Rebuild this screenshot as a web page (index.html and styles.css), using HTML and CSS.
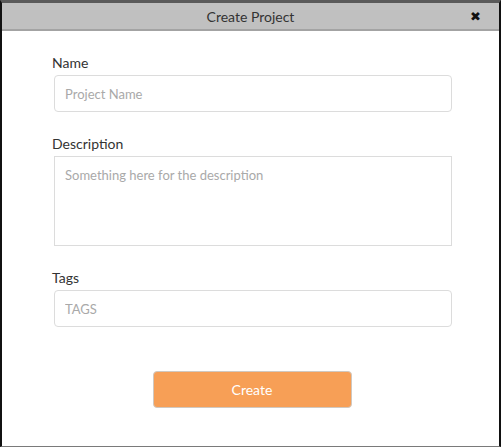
FILE: index.html
```html
<!DOCTYPE html>
<html>
<head>
<meta charset="utf-8">
<link rel="stylesheet" href="styles.css">
</head>
<body>
<div class="dialog">
  <div class="header">
    <span class="title">Create Project</span>
    <span class="close">&#x2716;</span>
  </div>
  <div class="body">
    <div class="field">
      <label class="label">Name</label>
      <input class="input" type="text" placeholder="Project Name">
    </div>
    <div class="field">
      <label class="label">Description</label>
      <textarea class="textarea" placeholder="Something here for the description"></textarea>
    </div>
    <div class="field">
      <label class="label">Tags</label>
      <input class="input" type="text" placeholder="TAGS">
    </div>
    <div class="actions">
      <button class="btn">Create</button>
    </div>
  </div>
</div>
</body>
</html>
```
FILE: styles.css
```css
html, body {
  margin: 0;
  padding: 0;
  background: #fff;
}
body {
  font-family: Lato, "Liberation Sans", sans-serif;
}
.dialog {
  box-sizing: border-box;
  width: 501px;
  height: 447px;
  border-top: 3px solid #5a5a5a;
  border-left: 2px solid #111;
  border-right: 2px solid #111;
  border-bottom: 1px solid #7a7a7a;
  display: flex;
  flex-direction: column;
}
.header {
  position: relative;
  height: 26px;
  background: #c0c0c0;
  border-bottom: 2px solid #a3a3a3;
  display: flex;
  align-items: center;
  justify-content: center;
}
.title {
  font-size: 14px;
  color: #333;
}
.close {
  position: absolute;
  right: 18px;
  top: 6px;
  font-size: 13px;
  color: #111;
  font-family: "DejaVu Sans", sans-serif;
  font-weight: bold;
}
.body {
  padding: 23px 47px 0 50px;
  display: flex;
  flex-direction: column;
}
.field {
  display: flex;
  flex-direction: column;
  margin-bottom: 23px;
}
.label {
  font-size: 14px;
  font-weight: 400;
  color: #333;
  line-height: 18px;
  margin-bottom: 3px;
}
.input, .textarea {
  box-sizing: border-box;
  margin-left: 2px;
  width: 398px;
  border: 1px solid #dcdcdc;
  font-family: Lato, "Liberation Sans", sans-serif;
  font-size: 13px;
  color: #333;
  padding: 0 10px;
  outline: none;
}
.input {
  height: 37px;
  border-radius: 4px;
}
.textarea {
  height: 90px;
  resize: none;
  padding-top: 10px;
  border-radius: 0;
}
.input::placeholder, .textarea::placeholder {
  color: #a9a9a9;
}
.actions {
  display: flex;
  justify-content: center;
  margin-top: 21px;
}
.btn {
  width: 199px;
  height: 37px;
  background: #f79f56;
  border: 1px solid #d0c8c0;
  border-radius: 4px;
  color: #fff;
  font-family: Lato, "Liberation Sans", sans-serif;
  font-size: 14px;
}
```
